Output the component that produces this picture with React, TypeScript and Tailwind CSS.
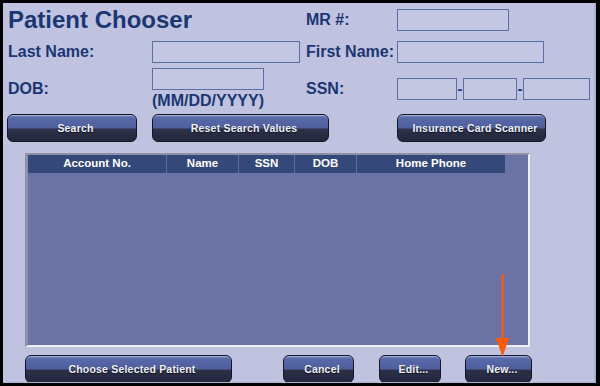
import React from "react";

const btn =
  "flex items-center justify-center pl-[7px] pt-px h-[28px] rounded-[6px] border border-[#141726] bg-[linear-gradient(to_bottom,#8595c8_0%,#5868a8_10%,#4f5f9e_50%,#2d3149_54%,#23273c_100%)] shadow-[inset_0_1px_0_rgba(180,190,230,0.6)] text-[10.5px] font-bold text-[#f0f2fa] tracking-[0.2px] [text-shadow:0_1px_1px_#10131f]";

const label = "text-[16px] font-bold text-[#1b3673] leading-none whitespace-nowrap pl-px";
const input = "h-[22px] border-[1.5px] border-[#5d6da6] bg-[#c3c7e2]";

export default function App() {
  const cols = [
    { t: "Account No.", w: 139 },
    { t: "Name", w: 72 },
    { t: "SSN", w: 56 },
    { t: "DOB", w: 62 },
    { t: "Home Phone", w: 148 },
  ];
  return (
    <div
      className="w-[600px] h-[386px] bg-black pt-[3px] pl-[3px] pr-[4px] pb-[3px] relative"
      style={{ fontFamily: '"Liberation Sans", Arial, sans-serif' }}
    >
      <div className="w-full h-full bg-[#bfc3df] border-r-2 border-b border-[#aab0d4] pl-[4px] flex flex-col overflow-hidden">
        <div className="grid grid-cols-[145px_153px_92px_1fr]">
          {/* row 1 */}
          <div className="col-span-2 h-[34px] flex items-center">
            <span className="text-[24px] font-bold text-[#1b3673] pl-px">Patient Chooser</span>
          </div>
          <div className="h-[34px] flex items-center">
            <span className={label}>MR #:</span>
          </div>
          <div className="h-[34px] flex items-center">
            <div className={`${input} w-[112px]`} />
          </div>
          {/* row 2 */}
          <div className="h-[29px] flex items-center">
            <span className={label}>Last Name:</span>
          </div>
          <div className="h-[29px] flex items-center">
            <div className={`${input} w-[148px]`} />
          </div>
          <div className="h-[29px] flex items-center">
            <span className={label}>First Name:</span>
          </div>
          <div className="h-[29px] flex items-center">
            <div className={`${input} w-[147px]`} />
          </div>
          {/* row 3 */}
          <div className="h-[45px] flex items-center">
            <span className={label}>DOB:</span>
          </div>
          <div className="h-[45px] flex flex-col pt-[2px]">
            <div className={`${input} w-[112px]`} />
            <span className="mt-[2px] text-[16px] font-bold text-[#1b3673] leading-[18px] whitespace-nowrap">
              (MM/DD/YYYY)
            </span>
          </div>
          <div className="h-[45px] flex items-center">
            <span className={label}>SSN:</span>
          </div>
          <div className="h-[45px] flex items-center">
            <div className={`${input} w-[60px]`} />
            <span className="w-[6px] text-center text-[15px] font-bold text-[#1b3673] leading-none">-</span>
            <div className={`${input} w-[54px]`} />
            <span className="w-[6px] text-center text-[15px] font-bold text-[#1b3673] leading-none">-</span>
            <div className={`${input} w-[67px]`} />
          </div>
        </div>

        {/* buttons */}
        <div className="flex mt-[3px]">
          <div className={`${btn} w-[130px]`}>Search</div>
          <div className={`${btn} w-[177px] ml-[15px]`}>Reset Search Values</div>
          <div className={`${btn} w-[149px] ml-[68px]`}>Insurance Card Scanner</div>
        </div>

        {/* table */}
        <div className="mt-[11px] ml-[18px] w-[505px] h-[194px] shrink-0 border-l-[3px] border-t-2 border-l-[#8e90a6] border-t-[#8e90a6] border-r-2 border-b-2 border-r-[#eceef8] border-b-[#eceef8] bg-[#6a73a3]">
          <div className="flex h-[18px] bg-[#35487a] w-[477px]">
            {cols.map((c, i) => (
              <div
                key={c.t}
                className={`flex items-center justify-center text-[11.5px] font-bold text-white ${
                  i < cols.length - 1 ? "border-r border-[#5a6b9c]" : ""
                }`}
                style={{ width: c.w }}
              >
                {c.t}
              </div>
            ))}
          </div>
        </div>

        {/* bottom buttons */}
        <div className="flex mt-[8px] ml-[18px]">
          <div className={`${btn} w-[207px]`}>Choose Selected Patient</div>
          <div className={`${btn} w-[71px] ml-[51px]`}>Cancel</div>
          <div className={`${btn} w-[62px] ml-[25px]`}>Edit...</div>
          <div className={`${btn} w-[67px] ml-[24px]`}>New...</div>
        </div>
      </div>

      {/* orange arrow */}
      <svg className="absolute left-[495px] top-[274px]" width="15" height="84" viewBox="0 0 15 84">
        <line x1="7.5" y1="0" x2="7.5" y2="68" stroke="#ff5a0a" strokeWidth="2.2" />
        <polygon points="1,64 14,64 7.5,83" fill="#ff5a0a" />
      </svg>
    </div>
  );
}
